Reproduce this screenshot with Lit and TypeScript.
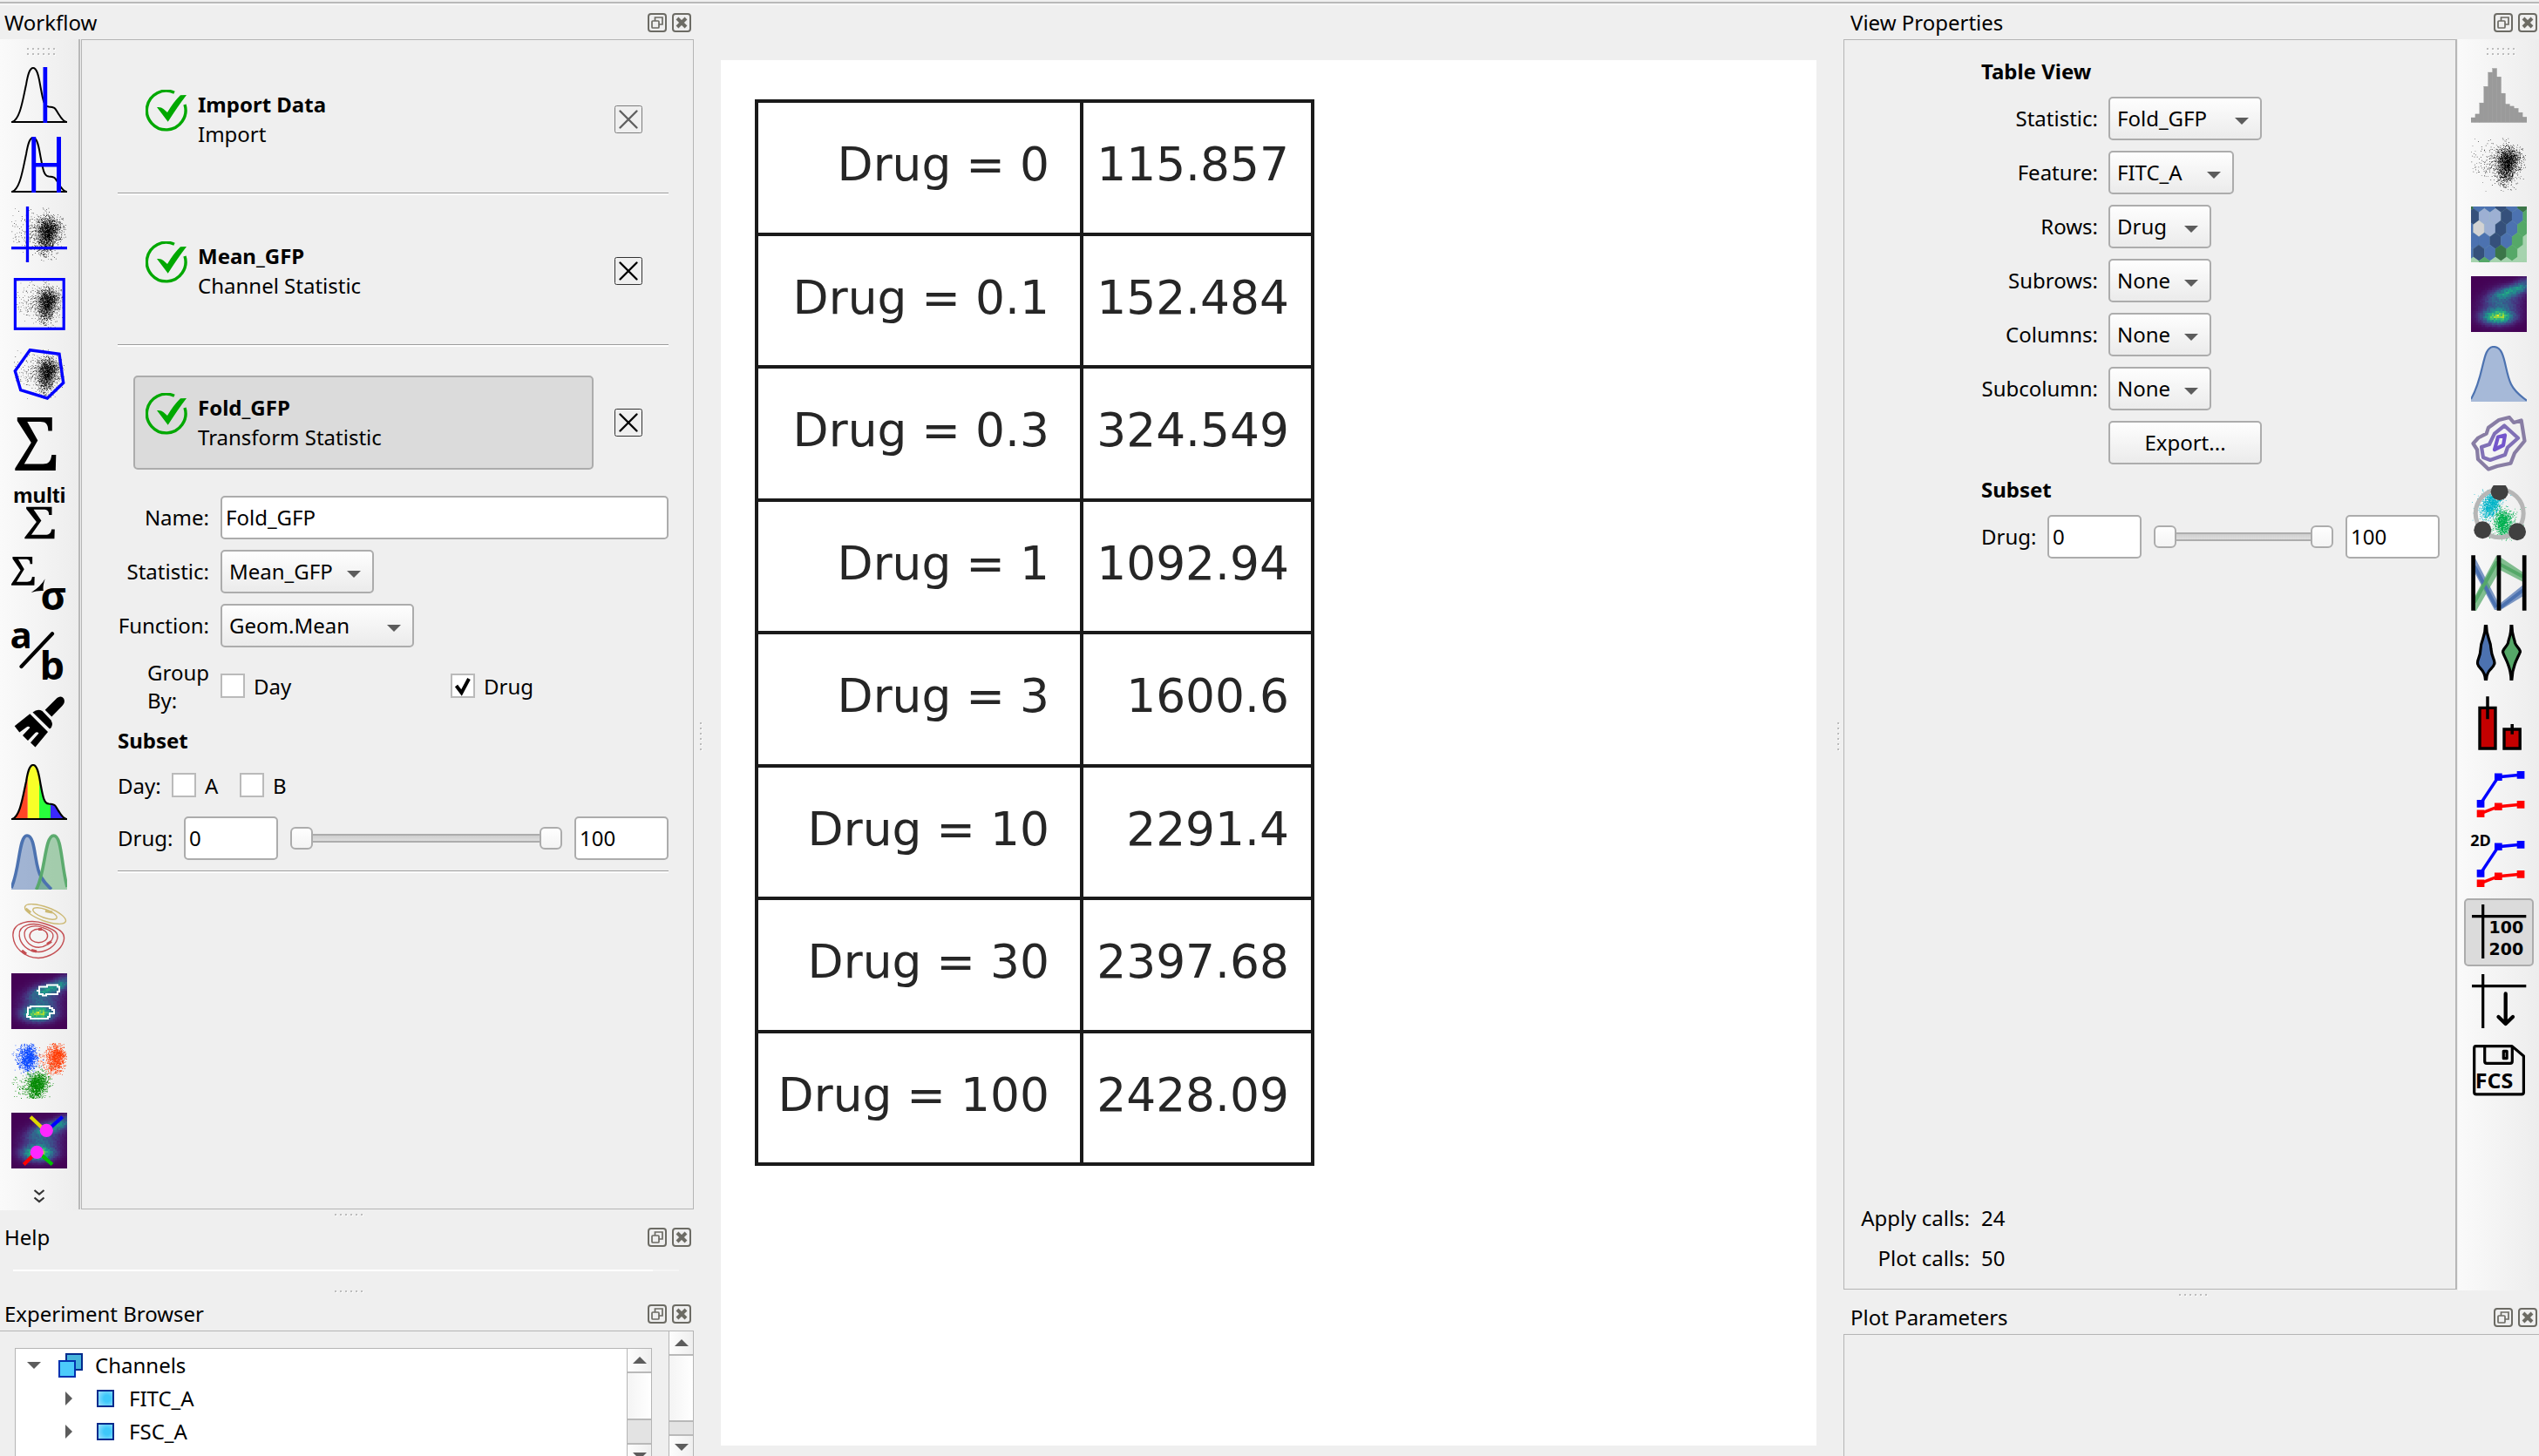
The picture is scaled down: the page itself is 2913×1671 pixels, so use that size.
import { LitElement, html, svg, css, nothing } from "lit";
import type { TemplateResult, SVGTemplateResult } from "lit";
import { customElement, property } from "lit/decorators.js";

/* ---------- procedural artwork ---------- */

function rng(seed: number) {
  let s = seed >>> 0;
  return () => {
    s = (s * 1664525 + 1013904223) >>> 0;
    return s / 4294967296;
  };
}

type Blob = [cx: number, cy: number, sx: number, sy: number, n: number];

function cloud(seed: number, blobs: Blob[], size = 0.7): string {
  const r = rng(seed);
  const gauss = () => Math.sqrt(-2 * Math.log(r() + 1e-9)) * Math.cos(6.2832 * r());
  let d = "";
  for (const [cx, cy, sx, sy, n] of blobs) {
    for (let i = 0; i < n; i++) {
      const x = cx + gauss() * sx;
      const y = cy + gauss() * sy;
      if (x < 0 || x > 63.4 || y < 0 || y > 63.4) continue;
      d += `M${x.toFixed(1)} ${y.toFixed(1)}h${size}v${size}h-${size}z`;
    }
  }
  return d;
}

const POINTS = cloud(7, [
  [43.5, 25, 6.8, 7.2, 1050],
  [39.5, 39, 5.6, 8.5, 640],
  [34, 32, 11, 11, 320],
  [12, 27, 8, 11, 50],
]);

const VIRIDIS = [
  [68, 1, 84], [72, 36, 117], [65, 68, 135], [53, 95, 141], [42, 120, 142],
  [33, 145, 140], [34, 168, 132], [68, 191, 112], [122, 209, 81], [189, 223, 38], [253, 231, 37],
];

function viridis(t: number): string {
  const p = Math.max(0, Math.min(0.9999, t)) * 10;
  const i = Math.floor(p);
  const f = p - i;
  const c = VIRIDIS[i].map((v, k) => Math.round(v + (VIRIDIS[i + 1][k] - v) * f));
  return `rgb(${c.join(",")})`;
}

function densityMap(): SVGTemplateResult[] {
  const r = rng(21);
  const cells: SVGTemplateResult[] = [];
  const n = 32;
  for (let j = 0; j < n; j++) {
    for (let i = 0; i < n; i++) {
      const x = i * 2 + 1;
      const y = j * 2 + 1;
      const g = (cx: number, cy: number, sx: number, sy: number, k: number) => {
        const u = x - cx;
        const v = y - cy + k * u;
        return Math.exp(-(u * u) / (2 * sx * sx) - (v * v) / (2 * sy * sy));
      };
      const base =
        0.68 * g(31, 47, 11.5, 5, 0) + 0.42 * g(45, 17, 13, 4.5, 0.3) +
        0.32 * g(34, 34, 14, 12, 0.12) + 0.18 * g(60, 11, 7, 7, 0.4);
      const t = base * (0.82 + 0.36 * r());
      cells.push(svg`<rect x=${i * 2} y=${j * 2} width="2.1" height="2.1" fill=${viridis(t)}></rect>`);
    }
  }
  return cells;
}

const HUMP = "M1 63C10 60 13 38 17 20C19 8 21 1 25 1C29 1 31 8 33 20C36 36 37 45 43 45.5C52 46 50 48 55 55C58 60 60 62 63 63";

const hump = (w = 2) => svg`<path d=${HUMP} fill="none" stroke="#000" stroke-width=${w}></path>
  <path d="M0 63H64" stroke="#000" stroke-width="2"></path>`;

const points = () => svg`<path d=${POINTS} fill="#000"></path>`;

const sigma = (x: number, y: number, w: number, h: number) =>
  svg`<path transform="translate(${x} ${y}) scale(${w / 47} ${h / 61})" d="M2.5 0H42.500V15.500H38C38 8 35.500 5 29 5H14L26 26.500L10.500 53.500H32C38.500 53.500 41 50.500 42 43H47L46.500 61H0V58.500L18.500 29L2.500 4z" fill="#000"></path>`;

const HEX: Record<string, string> = {
  b: "#4c72b0", l: "#9db0d3", n: "#35507b", x: "#d3d3d3", g: "#55a868", p: "#a5d3ae", d: "#3b7548",
};

function hexbin(): SVGTemplateResult[] {
  const rows = ["dbbnbd", "nllnbg", "bxlnbg", "bbnbgp", "bnbdgp", "pgpppp"];
  const out: SVGTemplateResult[] = [];
  rows.forEach((row, j) => {
    const y = -2.5 + j * 13.95;
    const x0 = j % 2 ? 2.7 : -3.7;
    [...row].forEach((c, i) => {
      const x = x0 + i * 12.67;
      out.push(svg`<path transform="translate(${x} ${y})" fill=${HEX[c]} stroke=${HEX[c]} stroke-width=".3" d="M0 -9.300L6.330 -4.650V4.650L0 9.300L-6.330 4.650V-4.650z"></path>`);
    });
  });
  return out;
}

const histogram = () =>
  [5.5, 9.6, 22.4, 41.3, 57.5, 62, 52.3, 33.4, 21, 18.6, 16.2, 11.4, 6.2].map(
    (h, i) => svg`<rect x=${i * 4.923} y=${63.5 - h} width="4.95" height=${h} fill="#9a9a9a" stroke="#8f8f8f" stroke-width=".3"></rect>`
  );

const RED_RING = "M2 38C0 20 24 18 38 23C54 28 63 33 60 43C57 54 44 62 31 62.500C14 62 3 50 2 38z";

const series = () => svg`
  <path d="M11 45.300L31.300 14.700L57 12.300" stroke="#00f" stroke-width="3.4" fill="none"></path>
  <path d="M11 56.700L31.300 48.700L57 46.300" stroke="#f00" stroke-width="3.4" fill="none"></path>
  <path d="M6.700 41h8.700v8.700h-8.700zM27 10.400h8.700v8.700H27zM52.700 8h8.700v8.700h-8.700z" fill="#00f"></path>
  <path d="M6.700 52.400h8.700v8.700h-8.700zM27 44.400h8.700v8.700H27zM52.700 42h8.700v8.700h-8.700z" fill="#f00"></path>`;

const cross = () => svg`<path d="M1 14.700H63.300M13.700 1V63" stroke="#000" stroke-width="3.2"></path>`;

/* icons that carry lettering may reach a little past their 64px square */
const LETTERED = new Set(["multi", "transform", "ratio", "stats2d", "table", "fcs"]);

const ICONS: Record<string, () => unknown> = {
  threshold: () => svg`${hump()}<rect x="36.5" y="0" width="4.700" height="64" fill="#00f"></rect>`,
  range: () => svg`${hump()}<path d="M23.300 0h4.900v30H52V0h5v64H52V34.500H28.200V64h-4.900z" fill="#00f"></path>`,
  quad: () => svg`${points()}<path d="M18.500 0V64M0 47.700H64" stroke="#00f" stroke-width="3.3"></path>`,
  range2d: () => svg`<g transform="translate(3 3) scale(.92)">${points()}</g><rect x="4.4" y="3.600" width="55.800" height="56.700" fill="none" stroke="#00f" stroke-width="3.2"></rect>`,
  polygon: () => svg`<g transform="translate(3 3) scale(.92)">${points()}</g><path d="M21.300 4.700L55 9.300L59.700 42.300L41.300 60L10.700 50.700L4.300 28.700z" fill="none" stroke="#00f" stroke-width="3.4"></path>`,
  sigma: () => sigma(4.3, 2, 47, 61),
  multi: () => svg`<text x="2" y="20" class="sans" font-size="24.500" textLength="60.500" lengthAdjust="spacingAndGlyphs">multi</text>${sigma(15.3, 24.7, 34.5, 36.6)}`,
  transform: () => svg`${sigma(0, 2, 26.7, 32.7)}<path d="M38.700 27.300Q34 36 22.700 43Q30 40.500 36.700 41Q36 35 38.700 27.300z"></path>
    <text x="33.500" y="63" class="open" font-size="45">σ</text>`,
  ratio: () => svg`<text x="-1.500" y="27" class="open" font-size="42">a</text><text x="32.500" y="62.800" class="open" font-size="45">b</text>
    <path d="M47 10.300L11.500 48" stroke="#000" stroke-width="4.200" stroke-linecap="round"></path>`,
  brush: () => svg`<path d="M38.700 17.700L51 5.500C55 1.500 58 2 60 4.500C62 8 60.500 11 58 13.500L46.300 25.500z"></path>
    <path d="M24.500 20.500Q30 16 35.500 19L45.500 29.500Q49 36 44 39.500z"></path>
    <path d="M21.300 22.300L42 43L27.500 60.500L22 55.300L31.500 44.500Q29.500 42.500 27.500 44L19 53L13 47L21.500 38Q19.500 36 17.500 37.500L9.300 43.500L3.700 36.300z"></path>`,
  spectrum: () => svg`<clipPath id="under"><path d=${HUMP + "z"}></path></clipPath>
    <g clip-path="url(#under)"><path d="M0 0h18.800v64H0z" fill="#ff4526"></path><path d="M18.800 0H32v64H18.800z" fill="#f8ff28"></path><path d="M32 0h13v64H32z" fill="#28ff3c"></path><path d="M45 0h19v64H45z" fill="#3a28ff"></path></g>${hump(2.2)}`,
  overlap: () => svg`<path d="M0 63C10 42 9 2 18 2C29 2 27 34 34 50C38 57 43 61 46 64H0z" fill="#4c72b0" fill-opacity=".5"></path>
    <path d="M28 64C39 46 39 2 48.500 2C57 2 57 30 64 61V64z" fill="#55a868" fill-opacity=".5"></path>
    <path d="M0 62C10 40 8.500 2 18 2C28.500 2 26 38 34.500 50C38 56 42 60 46 63.500" fill="none" stroke="#4c72b0" stroke-width="3.6"></path>
    <path d="M28.500 64C39 46 38 2 48.500 2C58 2 57 34 64 61" fill="none" stroke="#55a868" stroke-width="3.600" stroke-opacity=".95"></path>`,
  contour: () => svg`<g fill="none" stroke="#ccb974" stroke-width="1.400"><ellipse cx="39" cy="12" rx="24.800" ry="8" transform="rotate(20 39 12)"></ellipse><ellipse cx="38.500" cy="11.500" rx="14.500" ry="4.800" transform="rotate(20 38.500 11.500)"></ellipse></g>
    <path d="M16.500 6l5.500 4.500M39 8.500l8 1.500" stroke="#ccb974" stroke-width="3.200"></path>
    <g fill="none" stroke="#c44e52"><path stroke-width="1.400" d=${RED_RING}></path>
    <path stroke-width="1.800" transform="translate(7.700 8) scale(.75 .76)" d=${RED_RING}></path>
    <path stroke-width="2.300" transform="translate(14 14) scale(.56 .58)" d=${RED_RING}></path></g>
    <ellipse cx="31.300" cy="37" rx="10.300" ry="7.800" fill="none" stroke="#c44e52" stroke-width="1.400"></ellipse>
    <path d="M12 54l5 4M23 53.500l6 1.500M41 46.500l5-3M31 29.500h4" stroke="#c44e52" stroke-width="3.200"></path>`,
  density: () => svg`${densityMap()}`,
  binning: () => svg`${densityMap()}<g fill="none" stroke="#fff" stroke-width="2"><path d="M29 20h3v-4.500H41V13.500H53V15.500H55V21H53V24H40V25.500H36V24H32V20.500"></path>
    <path d="M17 47h2V39.500H22V38H44V40H47V42H49V46H44V50H42V52H22V50H18V46.500"></path></g>`,
  clusters: () => svg`
    <path fill="#0a48ff" d=${cloud(3, [[20, 15, 4.6, 7, 750], [15, 17, 7, 7, 200], [17, 26, 4.5, 5, 120]], 0.85)}></path>
    <path fill="#ff3c05" d=${cloud(4, [[52.5, 15, 5, 7, 750], [47, 18, 7, 7, 200], [48, 28, 4.5, 5, 120]], 0.85)}></path>
    <path fill="#058a05" d=${cloud(5, [[31, 45, 5.5, 6, 750], [27, 55, 4.5, 7, 400], [20, 50, 10, 8, 200]], 0.85)}></path>`,
  beads: () => svg`${densityMap()}<g stroke-width="4.200"><path d="M22 4.700L36 18" stroke="#e0d800"></path><path d="M58.700 4.700L45 17" stroke="#00f"></path><path d="M14.300 59.500L26 48" stroke="#f00"></path><path d="M47 59.500L34 48" stroke="#00c000"></path></g>
    <circle cx="40.300" cy="20.300" r="7.600" fill="#ff28ff"></circle><circle cx="29.300" cy="45.300" r="7.600" fill="#ff28ff"></circle>`,
  histogram: () => svg`${histogram()}`,
  scatter: () => points(),
  hexbin: () => svg`<rect width="64" height="64" fill="#a5d3ae"></rect>${hexbin()}`,
  kde: () => svg`<path d="M0 61C16 34 12 1 26 1C40 1 38 28 46 44C51 54 57 57 64 62.700V64H0z" fill="#a6b9d8"></path><path d="M0 61C16 34 12 1 26 1C40 1 38 28 46 44C51 54 57 57 64 62.700" fill="none" stroke="#4c72b0" stroke-width="2.200"></path>`,
  contour2: () => svg`<g fill="none" stroke-linejoin="round"><path stroke="#887da4" stroke-width="4.200" d="M2.500 32L8.300 25.500L17.700 20.600L20 13.700L32 5L44 2L49 8L57.700 5.500L59.300 15.400L61.500 29L50 43L45.500 54.700L30 58L20 61.500L8 50L7 39z"></path>
    <path stroke="#8070b6" stroke-width="4.200" d="M12 36L21 33L27 20.600L38.300 11.500L54 25.800L42 36.500L39 45L22 51L14 48z"></path>
    <path stroke="#7355cc" stroke-width="4.200" d="M31 24.500L39 22.500L37 34L27 39z"></path></g>`,
  radviz: () => svg`<path fill="#00b4c8" d=${cloud(8, [[24, 19, 4.5, 6, 700], [19, 29, 4.5, 5, 300], [17, 22, 8, 8, 150]], 0.8)}></path><path fill="#00b050" d=${cloud(9, [[36, 39, 4.8, 6, 700], [37, 50, 4, 5, 300], [39, 45, 9, 9, 180]], 0.8)}></path>
    <circle cx="32.700" cy="32.300" r="27.500" fill="none" stroke="#b6b6b6" stroke-width="5"></circle><g fill="#404040"><circle cx="32.700" cy="7.300" r="10"></circle><circle cx="13.300" cy="51.300" r="10"></circle><circle cx="53" cy="53.300" r="10"></circle></g>`,
  parallel: () => svg`<g fill-opacity=".72"><path fill="#4c72b0" d="M4 2L31 54V63H27L4 20zM34 55L60 34V47L34 63z"></path><path fill="#55a868" d="M4 48L29 1H34V16L6 64H4zM33 2L60 20V31L33 17z"></path></g>
    <path d="M4 13L29 60M34 60L60 40" stroke="#4c72b0" stroke-width="4"></path><path d="M4 54L29 9L34 11L60 25" fill="none" stroke="#55a868" stroke-width="4"></path>
    <path d="M2.600 .300V63.700M32 .300V63.700M61.200 .300V63.700" stroke="#000" stroke-width="4.700"></path>`,
  violin: () => svg`<g stroke="#000" stroke-width="3.200" stroke-linejoin="round"><path fill="#4c72b0" d="M16.500 0H17.500C17.500 16 22.500 16 23 28C24 38 26.500 38 27 44C26 51 18 50 17.500 63.500H16.500C16 50 8 51 7.500 44C7.500 38 10.500 38 11 28C11.500 16 16.500 16 16.500 0z"></path>
    <path fill="#55a868" d="M46 0H46.800C47 14 49.500 14 50.500 21C52 25 56.500 28 56.500 31C54 38 47 46 46.800 63.500H46C46 46 38 38 36.500 31C36.500 28 41 25 42.500 21C43.500 14 46 14 46 0z"></path></g>`,
  bars: () => svg`<g fill="#c40000" stroke="#000" stroke-width="3.400"><path d="M10 15.400H28V62H10zM38 40H56.200V62H38z"></path><path d="M19 2.300V28.300M47.200 34V45.700" stroke-width="3.500"></path></g>`,
  stats1d: () => series(),
  stats2d: () => svg`${series()}<text x="-.800" y="14" class="open" font-size="18">2D</text>`,
  table: () => svg`${cross()}<text x="20.500" y="34.300" class="deja" font-size="19">100</text><text x="20.500" y="58.600" class="deja" font-size="19">200</text>`,
  exportTable: () => svg`${cross()}<path d="M39.700 23.500V58M31.500 50L39.700 58L48 50" fill="none" stroke="#000" stroke-width="4.300" stroke-linecap="round" stroke-linejoin="round"></path>`,
  fcs: () => svg`<g fill="none" stroke="#000" stroke-width="3.200" stroke-linejoin="round"><path d="M5.500 3.600H47L60.400 15V56.500Q60.400 58.800 58 58.800H6Q3.700 58.800 3.700 56.500V6Q3.700 3.600 5.500 3.600z"></path><path d="M15.700 4V21Q15.700 23.400 18 23.400H45Q47.300 23.400 47.300 21V4"></path><rect x="37.300" y="9.300" width="3.800" height="8.400"></rect></g>
    <text x="4.800" y="51.700" class="open" font-size="23.500" textLength="43.500" lengthAdjust="spacingAndGlyphs">FCS</text>`,
};

/* ---------- toolbar ---------- */

@customElement("tool-bar")
class ToolBar extends LitElement {
  @property({ attribute: false }) icons: string[] = [];
  @property() active = "";
  @property({ type: Boolean }) more = false;

  static styles = css`
    :host { display: block; background: linear-gradient(90deg, #fafafa, #ededed); }
    .bar { display: flex; flex-direction: column; align-items: center; padding-top: 10px; }
    .dots { display: grid; grid-template-columns: repeat(6, 2px); gap: 4px; margin-bottom: 6px; margin-left: 4px; }
    .dots i { width: 2px; height: 2px; background: #bcbcbc; box-shadow: 1px 1px 0 #fafafa; }
    .tool { box-sizing: border-box; width: 80px; height: 80px; padding: 8px; flex: none; }
    .tool.on { height: 78px; margin: 2px 0 0; padding: 4px 6px; border: 2px solid #acacac; border-radius: 5px; background: #dbdbdb; }
    svg { display: block; }
    .free { overflow: visible; }
    .more { margin-top: 15px; }
    .sans { font-family: "Liberation Sans", sans-serif; font-weight: 700; }
    .open { font-family: "Open Sans", sans-serif; font-weight: 700; }
    .deja { font-family: "DejaVu Sans", sans-serif; font-weight: 700; }
  `;

  render() {
    return html`<div class="bar">
      <div class="dots">${Array.from({ length: 12 }, () => html`<i></i>`)}</div>
      ${this.icons.map(
        (name) => html`<div class="tool ${name === this.active ? "on" : ""}">
          <svg class=${LETTERED.has(name) ? "free" : "fixed"} width="64" height="64" viewBox="0 0 64 64">${ICONS[name]()}</svg>
        </div>`
      )}
      ${this.more
        ? html`<svg class="more" width="14" height="18" viewBox="0 0 14 18"><path d="M1.500 2L7 6.500L12.500 2M1.500 10.500L7 15L12.500 10.500" fill="none" stroke="#333" stroke-width="2.200"></path></svg>`
        : nothing}
    </div>`;
  }
}

/* ---------- dock title ---------- */

@customElement("dock-title")
class DockTitle extends LitElement {
  @property() label = "";
  static styles = css`
    :host { display: flex; height: 39px; flex: none; box-sizing: border-box; padding: 4px 3px 0 5px; line-height: 32px; }
    .label { flex: 1; }
    .buttons { display: flex; gap: 6px; padding-top: 5px; }
    svg { display: block; }
  `;
  render() {
    return html`<span class="label">${this.label}</span>
      <span class="buttons">
        <svg width="22" height="22" viewBox="0 0 22 22" fill="none" stroke="#6c6b64" stroke-width="2">
          <rect x="1" y="1" width="20" height="20" rx="3"></rect><rect x="5" y="9" width="8" height="8" rx="1" stroke-width="1.700"></rect><path d="M8.500 9V5H17V13H13" stroke-width="1.700"></path>
        </svg>
        <svg width="22" height="22" viewBox="0 0 22 22" fill="none" stroke="#6c6b64" stroke-width="2">
          <rect x="1" y="1" width="20" height="20" rx="3"></rect><path d="M6 6L16 16M16 6L6 16" stroke-width="4"></path>
        </svg>
      </span>`;
  }
}

/* ---------- application ---------- */

const TABLE: [string, string][] = [
  ["Drug = 0", "115.857"], ["Drug = 0.1", "152.484"], ["Drug = 0.3", "324.549"], ["Drug = 1", "1092.94"],
  ["Drug = 3", "1600.6"], ["Drug = 10", "2291.4"], ["Drug = 30", "2397.68"], ["Drug = 100", "2428.09"],
];

const STEPS = [
  { name: "Import Data", kind: "Import", enabled: false, selected: false },
  { name: "Mean_GFP", kind: "Channel Statistic", enabled: true, selected: false },
  { name: "Fold_GFP", kind: "Transform Statistic", enabled: true, selected: true },
];

const VIEW_FIELDS: [string, string, string][] = [
  ["Statistic:", "Fold_GFP", "w176"], ["Feature:", "FITC_A", "w144"], ["Rows:", "Drug", "w118"],
  ["Subrows:", "None", "w118"], ["Columns:", "None", "w118"], ["Subcolumn:", "None", "w118"],
];

@customElement("app-root")
class AppRoot extends LitElement {
  static styles = css`
    :host { display: block; }
    * { box-sizing: border-box; }
    svg { display: block; flex: none; }
    .app { width: 2913px; height: 1671px; overflow: hidden; background: #efefef; color: #000;
      font: 24px/32px "Noto Sans", sans-serif; display: flex; flex-direction: column; padding-top: 2px; white-space: nowrap; }
    .top { height: 4px; flex: none; background: #f7f7f7; border-top: 2px solid #b9b9b9; }
    .main { display: flex; flex: 1; min-height: 0; }
    .col { display: flex; flex-direction: column; flex: none; }
    .left { width: 796px; }
    .right { width: 798px; }
    .right dock-title { padding-left: 8px; padding-right: 2px; }
    .center { flex: 1; display: flex; min-width: 0; }
    .body { display: flex; flex: none; }
    .left .body { height: 1344px; }
    .right .body { height: 1436px; }
    .left tool-bar { width: 90px; }
    .right tool-bar { flex: 1; }
    .rule { width: 2px; background: #b9b9b9; margin-right: 1px; margin-bottom: 1px; }
    .panel { border: 1px solid #b5b5b5; display: flex; flex-direction: column; }
    .workflow { width: 703px; height: 1343px; padding: 4px 28px 0 41px; }
    .split { height: 11px; flex: none; display: flex; justify-content: center; padding-top: 4px; padding-left: 4px; gap: 4px; }
    .split i, .vsplit i { width: 2px; height: 2px; background: #bcbcbc; box-shadow: 1px 1px 0 #fafafa; }
    .vsplit { width: 31px; flex: none; display: flex; flex-direction: column; gap: 4px; padding: 823px 0 0 7px; }
    .vsplit.r { padding-left: 24px; }

    .step { height: 171px; display: flex; align-items: flex-start; padding: 33px 0 0 18px; }
    .card { width: 528px; height: 108px; display: flex; gap: 12px; padding: 20px 14px; border-radius: 5px; }
    .card.sel { background: #dbdbdb; border: 2px solid #acacac; padding: 18px 12px; }
    .names { line-height: 34px; }
    .names b { display: block; }
    .close { width: 32px; height: 32px; margin: 38px 0 0 24px; }
    .off { opacity: .6; }
    .hr { height: 3px; flex: none; background: #fff; border-top: 1px solid #9c9c9c; }

    .form { display: grid; grid-template-columns: 105px 514px; column-gap: 13px; row-gap: 12px; }
    .form > .lab { text-align: right; padding-top: 9px; height: 50px; }
    .input, .select { height: 50px; border: 2px solid #acacac; border-radius: 5px; padding: 7px 4px 0; background: #fff; }
    .select { display: flex; justify-content: space-between; padding: 7px 13px 0 8px; background: linear-gradient(#fefefe, #ebebeb); }
    .select svg { margin-top: 15px; }
    .w176 { width: 176px; } .w144 { width: 144px; } .w118 { width: 118px; } .w222 { width: 222px; }
    .num { width: 108px; }
    .group { display: flex; align-items: flex-start; height: 64px; margin: 13px 0 14px 34px; }
    .group .two { width: 84px; white-space: normal; }
    .group .check { margin-top: 16px; }
    .check { display: flex; align-items: flex-start; gap: 10px; }
    .box { width: 28px; height: 28px; border: 2px solid #bababa; background: #fff; margin-top: 1px; }
    .g1 { width: 264px; }
    .days { display: flex; margin: 20px 0 19px; }
    .days .dl { width: 62px; }
    .days .check { width: 78px; }
    .range { display: flex; gap: 14px; align-items: flex-start; height: 50px; flex: none; }
    .range .lab { padding-top: 9px; width: 62px; }
    .slider { flex: 1; height: 26px; margin-top: 12px; display: flex; align-items: center; }
    .knob { width: 26px; height: 26px; border: 2px solid #acacac; border-radius: 6px; background: linear-gradient(#fefefe, #f4f4f4); flex: none; }
    .track { flex: 1; height: 10px; border: solid #acacac; border-width: 2px 0; background: linear-gradient(#cfcfcf, #dedede); }
    .left .range + .hr { margin-top: 12px; }

    .help { height: 38px; flex: none; padding: 18px 17px 0 15px; display: flex; }
    .help .ln { width: 734px; height: 2px; background: #fff; }
    .help .ln2 { width: 30px; height: 2px; background: #f5f5f5; }

    .browser { flex: 1; min-height: 0; border: solid #b5b5b5; border-width: 1px 1px 0 0; display: flex; justify-content: space-between; overflow: hidden; }
    .tree { margin: 19px 0 0 17px; width: 731px; height: 125px; border: 1px solid #b5b5b5; background: #fff; display: flex; justify-content: space-between; }
    .rows { padding: 0 0 0 12px; display: flex; flex-direction: column; }
    .row { display: flex; height: 38px; align-items: center; }
    .r0 svg:first-child { margin-left: 1px; margin-right: 20px; }
    .r0 svg + svg { margin-right: 14px; }
    .rn { padding-left: 45px; }
    .rn svg:first-child { margin-right: 28px; }
    .rn svg + svg { margin-right: 17px; }
    .scroll { width: 28px; border-left: 1px solid #b5b5b5; background: linear-gradient(90deg, #f4f4f4, #fff); display: flex; flex-direction: column; align-items: center; flex: none; }
    .scroll .up { width: 100%; height: 28px; border-bottom: 2px solid #b9b9b9; display: grid; place-items: center; flex: none; background: linear-gradient(90deg, #fdfdfd, #efefef); }
    .scroll .thumb { width: 100%; border: solid #b9b9b9; border-width: 2px 0; background: #e3e3e3; flex: none; }
    .s1 .thumb { height: 30px; margin-top: 52px; }
    .s2 .thumb { height: 18px; margin-top: 74px; }
    .scroll .dn { padding-top: 9px; width: 100%; flex: 1; display: flex; justify-content: center; background: linear-gradient(90deg, #fdfdfd, #efefef); }

    .canvas { flex: 1; background: #fff; margin: 63px 0 12px; padding: 45px 0 0 39px; }
    .grid { border-collapse: collapse; color: #262626; font: 53.400px/60px "DejaVu Sans", sans-serif; }
    .grid td { border: 4.500px solid #1a1a1a; height: 152.500px; padding: 0 0 6px; text-align: right; vertical-align: middle; }
    .grid td:first-child { width: 373px; padding-right: 35px; }
    .grid td:last-child { width: 265px; padding-right: 25px; }

    .view { width: 703px; height: 1435px; padding: 20px 18px 19px 19px; justify-content: space-between; }
    .right .rule { width: 1px; margin: 0 1px 1px 0; }
    .vform { padding-left: 138px; }
    .vgrid { display: grid; grid-template-columns: 134px auto; justify-content: start; column-gap: 12px; row-gap: 12px; margin: 13px 0; }
    .vgrid .lab { text-align: right; padding-top: 9px; }
    .export { display: block; text-align: center; padding: 7px 0 0; }
    .sub { display: block; margin-bottom: 13px; }
    .calls { display: grid; grid-template-columns: 125px auto; justify-content: start; column-gap: 13px; row-gap: 14px; }
    .calls .lab { text-align: right; }
    .plot { flex: 1; border-bottom: 0; border-right: 0; }
  `;

  private dots() {
    return Array.from({ length: 6 }, () => html`<i></i>`);
  }

  private select(value: string, width: string): TemplateResult {
    return html`<div class="select ${width}"><span>${value}</span>
      <svg width="16" height="8" viewBox="0 0 16 8"><path d="M0 0H16L8 8z" fill="#5c5c5c"></path></svg></div>`;
  }

  private check(label: string, on = false, cls = ""): TemplateResult {
    return html`<div class="check ${cls}"><div class="box">${on
      ? html`<svg width="24" height="24" viewBox="0 0 24 24"><path d="M4.500 12L10.500 20L19 4" fill="none" stroke="#000" stroke-width="4"></path></svg>`
      : nothing}</div><span>${label}</span></div>`;
  }

  private range() {
    return html`<div class="range"><span class="lab">Drug:</span><div class="input num">0</div>
      <div class="slider"><div class="knob"></div><div class="track"></div><div class="knob"></div></div>
      <div class="input num">100</div></div>`;
  }

  private tri(d: string, w = 16, h = 16) {
    return html`<svg width=${w} height=${h} viewBox="0 0 ${w} ${h}"><path d=${d} fill="#5c5c5c"></path></svg>`;
  }

  private cube() {
    return html`<svg width="20" height="20" viewBox="0 0 20 20"><defs><radialGradient id="c" cx=".6" cy=".5" r=".7"><stop offset=".3" stop-color="#3ec8fa"></stop><stop offset="1" stop-color="#9ee0ff"></stop></radialGradient></defs><rect x="1" y="1" width="18" height="18" fill="url(#c)" stroke="#022a8c" stroke-width="2"></rect></svg>`;
  }

  render() {
    return html`<div class="app">
      <div class="top"></div>
      <div class="main">
        <div class="col left">
          <dock-title label="Workflow"></dock-title>
          <div class="body">
            <tool-bar more .icons=${["threshold", "range", "quad", "range2d", "polygon", "sigma", "multi", "transform", "ratio", "brush", "spectrum", "overlap", "contour", "binning", "clusters", "beads"]}></tool-bar>
            <div class="rule"></div>
            <div class="panel workflow">
              ${STEPS.map((s) => html`
                <div class="step">
                  <div class="card ${s.selected ? "sel" : ""}">
                    <svg width="48" height="48" viewBox="0 0 48 48"><path d="M33 3.300A22.300 22.300 0 1 0 45 17" fill="none" stroke="#00a800" stroke-width="3.400"></path><path d="M13 20Q18 19.500 20.500 22L25 26Q32 14 40 6.300L47 6Q37 19 25.700 36.800z" fill="#00a800"></path></svg>
                    <div class="names"><b>${s.name}</b>${s.kind}</div>
                  </div>
                  <svg class="close ${s.enabled ? "" : "off"}" viewBox="0 0 32 32"><rect x=".5" y=".5" width="31" height="31" rx="2" fill="none" stroke="#333"></rect><path d="M6.500 6.500L25.500 25.500M25.500 6.500L6.500 25.500" stroke="#000" stroke-width="2.400" stroke-linecap="round"></path></svg>
                </div>
                ${s.selected ? nothing : html`<div class="hr"></div>`}`)}
              <div class="form">
                <span class="lab">Name:</span><div class="input">Fold_GFP</div>
                <span class="lab">Statistic:</span>${this.select("Mean_GFP", "w176")}
                <span class="lab">Function:</span>${this.select("Geom.Mean", "w222")}
              </div>
              <div class="group"><span class="two">Group<br>By:</span>${this.check("Day", false, "g1")}${this.check("Drug", true)}</div>
              <b>Subset</b>
              <div class="days"><span class="dl">Day:</span>${this.check("A")}${this.check("B")}</div>
              ${this.range()}
              <div class="hr"></div>
            </div>
          </div>
          <div class="split">${this.dots()}</div>
          <dock-title label="Help"></dock-title>
          <div class="help"><div class="ln"></div><div class="ln2"></div></div>
          <div class="split">${this.dots()}</div>
          <dock-title label="Experiment Browser"></dock-title>
          <div class="browser">
            <div class="tree">
              <div class="rows">
                <div class="row r0">${this.tri("M0 4H16L8 12z")}
                  <svg width="28" height="28" viewBox="0 0 28 28"><rect x="9" y="1" width="18" height="18" fill="#46b4dc" stroke="#022a8c" stroke-width="2"></rect><rect x="1" y="9" width="18" height="18" fill="#4ccbfb" stroke="#0232b0" stroke-width="2"></rect></svg>
                  <span>Channels</span></div>
                ${["FITC_A", "FSC_A"].map((n) => html`<div class="row rn">${this.tri("M0 0L8 8L0 16z", 8, 16)}${this.cube()}<span>${n}</span></div>`)}
              </div>
              <div class="scroll s1"><div class="up">${this.tri("M0 12H16L8 4z")}</div><div class="thumb"></div><div class="dn">${this.tri("M0 0H16L8 8z", 16, 8)}</div></div>
            </div>
            <div class="scroll s2"><div class="up">${this.tri("M0 12H16L8 4z")}</div><div class="thumb"></div><div class="dn">${this.tri("M0 0H16L8 8z", 16, 8)}</div></div>
          </div>
        </div>
        <div class="center">
          <div class="vsplit">${this.dots()}</div>
          <div class="canvas">
            <table class="grid">${TABLE.map(([a, b]) => html`<tr><td>${a}</td><td>${b}</td></tr>`)}</table>
          </div>
          <div class="vsplit r">${this.dots()}</div>
        </div>
        <div class="col right">
          <dock-title label="View Properties"></dock-title>
          <div class="body">
            <div class="panel view">
              <div class="vform">
                <b>Table View</b>
                <div class="vgrid">
                  ${VIEW_FIELDS.map(([l, v, w]) => html`<span class="lab">${l}</span>${this.select(v, w)}`)}
                  <span></span><div class="select export w176">Export...</div>
                </div>
                <b class="sub">Subset</b>
                ${this.range()}
              </div>
              <div class="calls"><span class="lab">Apply calls:</span><span>24</span><span class="lab">Plot calls:</span><span>50</span></div>
            </div>
            <div class="rule"></div>
            <tool-bar active="table" .icons=${["histogram", "scatter", "hexbin", "density", "kde", "contour2", "radviz", "parallel", "violin", "bars", "stats1d", "stats2d", "table", "exportTable", "fcs"]}></tool-bar>
          </div>
          <div class="split">${this.dots()}</div>
          <dock-title label="Plot Parameters"></dock-title>
          <div class="panel plot"></div>
        </div>
      </div>
    </div>`;
  }
}
